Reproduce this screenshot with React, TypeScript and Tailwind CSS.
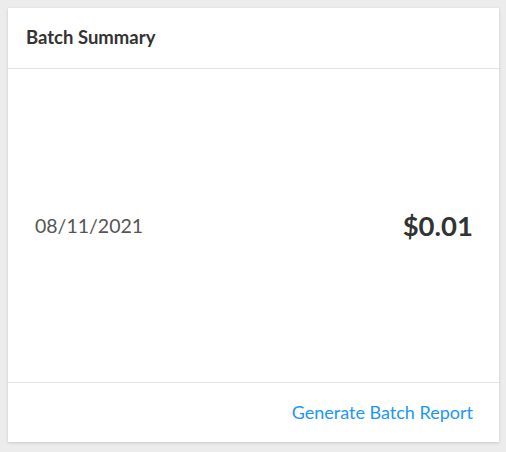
export default function App() {
  return (
    <div className="min-h-[452px] bg-[#ececec] p-2 font-['Lato',sans-serif]">
      <div className="flex h-[434px] w-[491px] flex-col bg-white shadow-[0_1px_3px_rgba(0,0,0,0.15)]">
        <div className="flex h-[61px] items-center border-b border-[#e3e3e3] px-[18px]">
          <h2 className="text-[18.5px] font-bold text-[#333]">Batch Summary</h2>
        </div>
        <div className="flex flex-1 items-center justify-between pl-[27px] pr-[26px]">
          <span className="text-[19.5px] text-[#555]">08/11/2021</span>
          <span className="text-[27.5px] font-bold text-[#333]">$0.01</span>
        </div>
        <div className="flex h-[60px] items-center justify-end border-t border-[#e3e3e3] px-[26px]">
          <a className="text-[18px] text-[#2196f3]">Generate Batch Report</a>
        </div>
      </div>
    </div>
  );
}
